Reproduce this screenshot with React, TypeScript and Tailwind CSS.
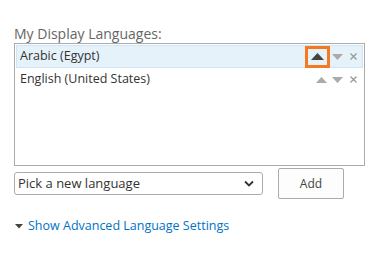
import { useState } from "react";

const languages = ["Arabic (Egypt)", "English (United States)"];

export default function App() {
  const [selected] = useState(0);

  return (
    <div
      className="h-[260px] w-[390px] bg-white pl-[14px] pt-[26px] text-[#444]"
      style={{ fontFamily: '"Open Sans", "Noto Sans", sans-serif' }}
    >
      <div className="text-[14px] leading-[16px] text-[#666]">My Display Languages:</div>

      <div className="mt-[1px] h-[123px] w-[351px] border border-[#ababab] p-[1px]">
        {languages.map((lang, i) => (
          <Row key={lang} label={lang} active={i === selected} />
        ))}
      </div>

      <div className="mt-[2px] flex items-center">
        <div className="flex h-[23px] w-[249px] items-center justify-between rounded-[3px] border border-[#ababab] pl-[3px] pr-[8px]">
          <span className="text-[13px] text-[#333]">Pick a new language</span>
          <svg width="10" height="7" viewBox="0 0 10 7">
            <path d="M1 1.5 L5 5.5 L9 1.5" fill="none" stroke="#333" strokeWidth="1.8" />
          </svg>
        </div>
        <button className="ml-[15px] h-[31px] w-[66px] rounded-[2px] border border-[#ababab] bg-[#fdfdfd] text-[12px] text-[#444]">
          Add
        </button>
      </div>

      <div className="mt-[18px] flex items-center gap-[5px] pl-[1px] text-[12.5px] text-[#0072c6]">
        <svg width="8" height="5" viewBox="0 0 8 5">
          <path d="M0 0 L8 0 L4 4.5 Z" fill="#444" />
        </svg>
        <span>Show Advanced Language Settings</span>
      </div>
    </div>
  );
}

function Row(props: { label: string; active: boolean }) {
  return (
    <div
      className={
        "flex h-[23px] items-center justify-between border pl-[3px] pr-[5px] " +
        (props.active ? "border-[#cde6f7] bg-[#e6f2fa]" : "border-transparent")
      }
    >
      <span className="text-[12.5px] text-[#333]">{props.label}</span>
      <div className="flex items-center">
        {props.active ? (
          <div className="flex h-[22px] w-[25px] items-center justify-center border-[3px] border-[#f47920]">
            <svg width="13" height="7" viewBox="0 0 13 7">
              <path d="M0 7 L6.5 0 L13 7 Z" fill="#444" />
            </svg>
          </div>
        ) : (
          <svg width="11" height="6" viewBox="0 0 11 6">
            <path d="M0 6 L5.5 0 L11 6 Z" fill="#aaa" />
          </svg>
        )}
        <svg className={props.active ? "ml-[2px]" : "ml-[5px]"} width="11" height="6" viewBox="0 0 11 6">
          <path d="M0 0 L11 0 L5.5 6 Z" fill="#aaa" />
        </svg>
        <svg className="ml-[7px]" width="7" height="7" viewBox="0 0 7 7">
          <path d="M0.5 0.5 L6.5 6.5 M6.5 0.5 L0.5 6.5" stroke="#999" strokeWidth="1.3" />
        </svg>
      </div>
    </div>
  );
}
